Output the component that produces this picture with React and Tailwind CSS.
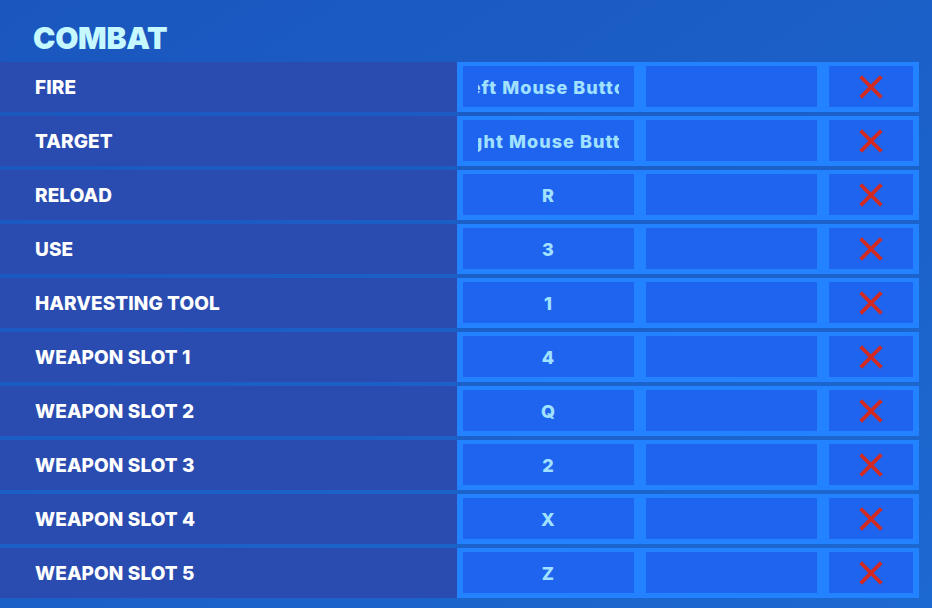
const ROWS = [
  { label: 'FIRE', key: 'Left Mouse Button' },
  { label: 'TARGET', key: 'Right Mouse Button' },
  { label: 'RELOAD', key: 'R' },
  { label: 'USE', key: '3' },
  { label: 'HARVESTING TOOL', key: '1' },
  { label: 'WEAPON SLOT 1', key: '4' },
  { label: 'WEAPON SLOT 2', key: 'Q' },
  { label: 'WEAPON SLOT 3', key: '2' },
  { label: 'WEAPON SLOT 4', key: 'X' },
  { label: 'WEAPON SLOT 5', key: 'Z' },
];

function ClearIcon() {
  return (
    <svg width="24" height="24" viewBox="0 0 24 24">
      <path d="M3 3 L21 21 M21 3 L3 21" stroke="#d22a20" strokeWidth="3.8" strokeLinecap="square" />
    </svg>
  );
}

function BindingRow({ label, keyName }) {
  return (
    <div className="flex h-[50px]">
      <div className="w-[457px] bg-[#2a4cb0] flex items-center pl-[35px] pt-[2px]">
        <span className="text-white text-[19px] font-extrabold tracking-[0.005em]">{label}</span>
      </div>
      <div className="w-[462px] bg-[#2382ff] flex gap-[12px] pl-[6px] pr-[6px] pt-[4px] pb-[5px]">
        <div className="w-[171px] bg-[#1f64ef] px-[15px] flex items-center pt-[1px]">
          <div className="w-full overflow-hidden flex justify-center">
            <span className="text-[#a0e2ff] text-[18px] font-extrabold whitespace-nowrap tracking-[0.06em]">{keyName}</span>
          </div>
        </div>
        <div className="w-[171px] bg-[#1f64ef]" />
        <div className="w-[84px] bg-[#1f64ef] flex items-center justify-center">
          <ClearIcon />
        </div>
      </div>
    </div>
  );
}

export default function App() {
  return (
    <div
      className="w-[932px] h-[608px] overflow-hidden bg-gradient-to-br from-[#1a56be] to-[#1c69d1]"
      style={{ fontFamily: 'Inter, "Liberation Sans", Arial, sans-serif' }}
    >
      <div className="h-[62px] flex items-end pl-[33px] pb-[9px]">
        <h1 className="text-[#c6f8ff] text-[30px] font-black leading-none tracking-[-0.01em]">COMBAT</h1>
      </div>
      <div className="flex flex-col gap-[4px]">
        {ROWS.map((r) => (
          <BindingRow key={r.label} label={r.label} keyName={r.key} />
        ))}
      </div>
    </div>
  );
}
